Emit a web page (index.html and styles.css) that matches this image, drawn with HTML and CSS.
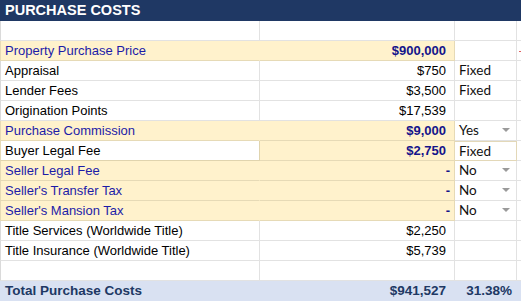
FILE: index.html
```html
<!DOCTYPE html>
<html>
<head>
<meta charset="utf-8">
<link rel="stylesheet" href="styles.css">
</head>
<body>
<div class="sheet">
  <div class="title">PURCHASE COSTS</div>

  <div class="row">
    <div class="c a"></div><div class="c b"></div><div class="c o"></div><div class="c d"></div>
  </div>

  <div class="row y">
    <div class="c a merge">Property Purchase Price</div><div class="c b strong">$900,000</div><div class="c o"></div><div class="c d"><span class="flag"></span></div>
  </div>

  <div class="row">
    <div class="c a">Appraisal</div><div class="c b">$750</div><div class="c o">Fixed</div><div class="c d"></div>
  </div>

  <div class="row">
    <div class="c a">Lender Fees</div><div class="c b">$3,500</div><div class="c o">Fixed</div><div class="c d"></div>
  </div>

  <div class="row">
    <div class="c a">Origination Points</div><div class="c b">$17,539</div><div class="c o"></div><div class="c d"></div>
  </div>

  <div class="row y">
    <div class="c a merge">Purchase Commission</div><div class="c b strong">$9,000</div><div class="c o drop">Yes<svg class="arrow" width="8" height="4" viewBox="0 0 8 4"><path d="M0 0h8L4 4z"/></svg></div><div class="c d"></div>
  </div>

  <div class="row y">
    <div class="c a plain">Buyer Legal Fee</div><div class="c b strong">$2,750</div><div class="c o boxed">Fixed</div><div class="c d"></div>
  </div>

  <div class="row y">
    <div class="c a merge">Seller Legal Fee</div><div class="c b strong dash">-</div><div class="c o drop">No<svg class="arrow" width="8" height="4" viewBox="0 0 8 4"><path d="M0 0h8L4 4z"/></svg></div><div class="c d"></div>
  </div>

  <div class="row y">
    <div class="c a merge">Seller's Transfer Tax</div><div class="c b strong dash">-</div><div class="c o drop">No<svg class="arrow" width="8" height="4" viewBox="0 0 8 4"><path d="M0 0h8L4 4z"/></svg></div><div class="c d"></div>
  </div>

  <div class="row y">
    <div class="c a merge">Seller's Mansion Tax</div><div class="c b strong dash">-</div><div class="c o drop">No<svg class="arrow" width="8" height="4" viewBox="0 0 8 4"><path d="M0 0h8L4 4z"/></svg></div><div class="c d"></div>
  </div>

  <div class="row">
    <div class="c a">Title Services (Worldwide Title)</div><div class="c b">$2,250</div><div class="c o"></div><div class="c d"></div>
  </div>

  <div class="row">
    <div class="c a">Title Insurance (Worldwide Title)</div><div class="c b">$5,739</div><div class="c o"></div><div class="c d"></div>
  </div>

  <div class="row">
    <div class="c a"></div><div class="c b"></div><div class="c o"></div><div class="c d"></div>
  </div>

  <div class="row total">
    <div class="c a">Total Purchase Costs</div><div class="c b">$941,527</div><div class="c o pct">31.38%</div><div class="c d"></div>
  </div>
</div>
</body>
</html>
```

FILE: styles.css
```css
html, body {
  margin: 0;
  padding: 0;
  background: #ffffff;
}

.sheet {
  width: 521px;
  font-family: "Liberation Sans", Arial, sans-serif;
  font-size: 13px;
  color: #000000;
}

.title {
  height: 21px;
  background: #1f3864;
  color: #ffffff;
  font-weight: bold;
  font-size: 14.5px;
  line-height: 21px;
  padding-left: 5px;
  box-sizing: border-box;
}

.row {
  display: grid;
  grid-template-columns: 260px 195px 62px 1fr;
  height: 20px;
}

.c {
  box-sizing: border-box;
  height: 20px;
  line-height: 19px;
  border-right: 1px solid #e2e2e2;
  border-bottom: 1px solid #e2e2e2;
  white-space: nowrap;
  overflow: hidden;
}

.a {
  border-left: 1px solid #dadada;
  padding-left: 4px;
}

.b {
  text-align: right;
  padding-right: 8px;
}

.o {
  padding-left: 4px;
  font-family: Lato, "Open Sans", sans-serif;
  font-size: 13.5px;
  color: #111111;
}

.d {
  border-right: none;
  display: flex;
  align-items: center;
}

/* yellow input rows */
.y .a,
.y .b {
  background: #fff2cc;
  border-bottom-color: #e6dab6;
  border-left-color: #e6dab6;
}

.y .a.merge {
  color: #1c1ca8;
  border-right-color: transparent;
}

.y .b {
  border-right-color: #e6dab6;
}

.y .a.plain {
  background: #ffffff;
  border-right-color: #e0d4ae;
  border-bottom-color: #e0d4ae;
}

.strong {
  font-weight: bold;
  color: #14148a;
}

.dash {
  padding-right: 4px;
}

.drop {
  display: flex;
  align-items: center;
  justify-content: space-between;
  padding-right: 6px;
}

.arrow {
  fill: #9a9a9a;
  margin-top: -1px;
}

.boxed {
  border: 1px solid #e3d8b8;
  border-left: none;
  line-height: 18px;
}

.flag {
  display: block;
  width: 2px;
  height: 1px;
  margin-left: 2px;
  margin-top: 1px;
  background: #e06060;
}

/* total row */
.total .c {
  background: #d9e1f2;
  border-color: #d9e1f2;
  color: #203864;
  font-weight: bold;
  font-family: "Liberation Sans", Arial, sans-serif;
  font-size: 13.5px;
}

.total .pct {
  text-align: right;
  padding-right: 4px;
  padding-left: 0;
}
```
